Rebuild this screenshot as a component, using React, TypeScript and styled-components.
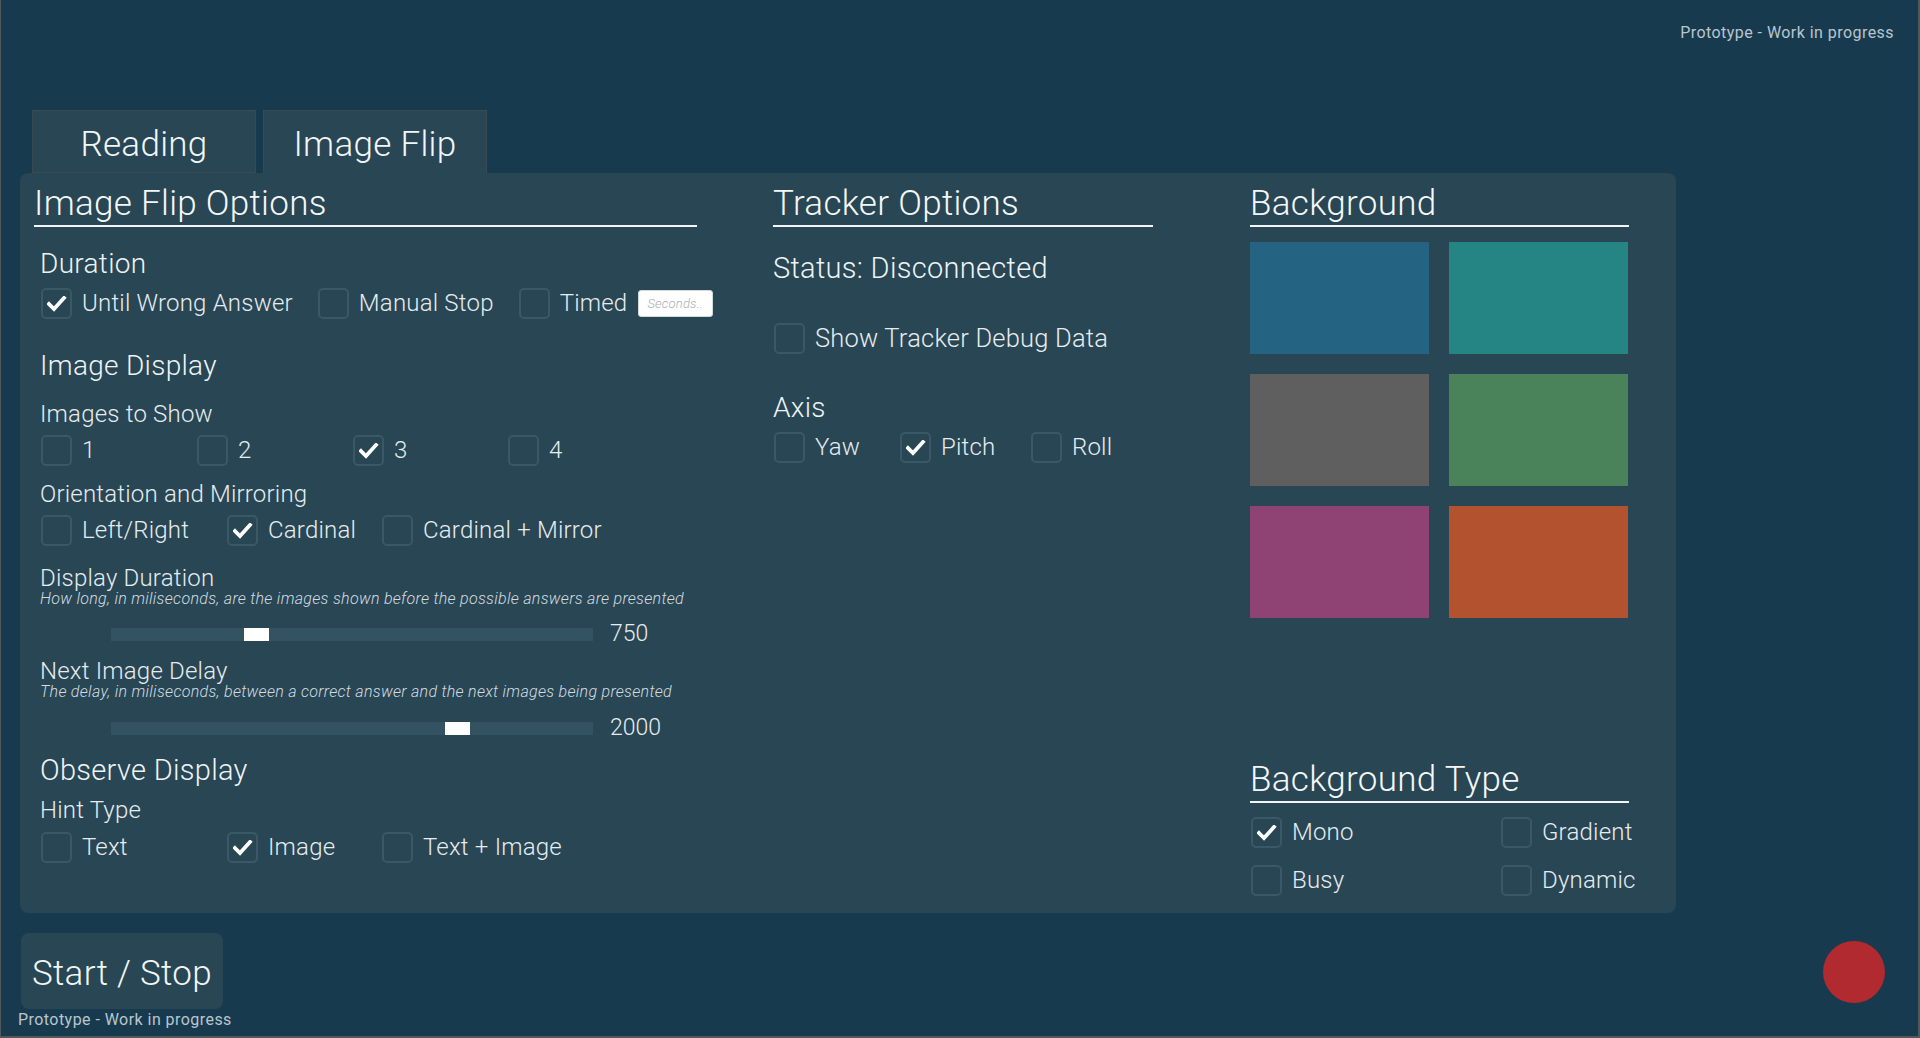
import React from "react";
import styled, { createGlobalStyle } from "styled-components";

const GlobalStyle = createGlobalStyle`
  html, body { margin: 0; padding: 0; background: #183a4e; }
  body { font-family: Roboto, "Liberation Sans", sans-serif; color: #eaf0f2; }
  * { box-sizing: border-box; }
`;

const Page = styled.div`
  width: 1920px;
  height: 1038px;
  background: #183a4e;
  border-left: 1px solid #54575a;
  border-right: 2px solid #54575a;
  border-bottom: 2px solid #54575a;
  display: flex;
  flex-direction: column;
  overflow: hidden;
`;

const TopBar = styled.div`
  height: 110px;
  display: flex;
  justify-content: flex-end;
  align-items: flex-start;
  padding: 23px 24px 0 0;
`;

const Note = styled.div`
  font-size: 16px;
  line-height: 20px;
  font-weight: 400;
  letter-spacing: 0.45px;
  color: #b9c6cd;
`;

const TabBar = styled.div`
  display: flex;
  gap: 7px;
  margin-left: 31px;
`;

const Tab = styled.div<{ $active?: boolean }>`
  width: 224px;
  height: 63px;
  background: #284654;
  border: 1px solid #3a4a53;
  border-bottom-color: ${(p) => (p.$active ? "#284654" : "#3a4a53")};
  font-size: 35px;
  font-weight: 300;
  line-height: 54px;
  padding-top: 7px;
  text-align: center;
  color: #f2f6f7;
  letter-spacing: 0.3px;
`;

const Panel = styled.div`
  margin-left: 19px;
  width: 1656px;
  height: 740px;
  background: #284654;
  border-radius: 8px;
  padding: 6px 0 0 14px;
  display: grid;
  grid-template-columns: 739px 477px 379px;
  align-items: start;
`;

const Column = styled.div<{ $width: number }>`
  width: ${(p) => p.$width}px;
  display: flex;
  flex-direction: column;
`;

const Body = styled.div`
  display: flex;
  flex-direction: column;
  padding-left: 6px;
`;

const SectionTitle = styled.div<{ $mt?: number }>`
  margin-top: ${(p) => p.$mt ?? 0}px;
  font-size: 35px;
  font-weight: 300;
  line-height: 42px;
  letter-spacing: 0.3px;
  padding-top: 4px;
  border-bottom: 2px solid #f2f5f6;
  color: #f4f7f8;
  white-space: nowrap;
`;

const SubHeading = styled.div<{ $mt: number; $size?: number }>`
  margin-top: ${(p) => p.$mt}px;
  font-size: ${(p) => p.$size ?? 28}px;
  font-weight: 300;
  line-height: 34px;
  letter-spacing: 0.3px;
  color: #eef3f5;
  white-space: nowrap;
`;

const FieldLabel = styled.div<{ $mt: number; $lh?: number }>`
  margin-top: ${(p) => p.$mt}px;
  font-size: 24px;
  font-weight: 300;
  line-height: ${(p) => p.$lh ?? 30}px;
  letter-spacing: 0.2px;
  color: #e6ecef;
  white-space: nowrap;
`;

const Hint = styled.div`
  font-size: 16px;
  font-style: italic;
  font-weight: 300;
  line-height: 16px;
  letter-spacing: 0.3px;
  color: #d3dce1;
  white-space: nowrap;
`;

const CheckRow = styled.div<{ $mt: number; $cols: string; $gap?: number; $rowGap?: number }>`
  margin-top: ${(p) => p.$mt}px;
  display: grid;
  grid-template-columns: ${(p) => p.$cols};
  column-gap: ${(p) => p.$gap ?? 0}px;
  row-gap: ${(p) => p.$rowGap ?? 0}px;
  align-items: center;
  justify-content: start;
`;

const CheckItem = styled.label<{ $size?: number }>`
  display: flex;
  align-items: center;
  gap: 10px;
  font-size: ${(p) => p.$size ?? 24}px;
  font-weight: 300;
  line-height: 31px;
  letter-spacing: 0.2px;
  color: #e6ecef;
  white-space: nowrap;
`;

const Box = styled.span`
  width: 31px;
  height: 31px;
  flex: none;
  border: 2px solid #3c5866;
  border-radius: 5px;
  margin-left: 1px;
  display: flex;
  align-items: center;
  justify-content: center;
`;

const SecondsInput = styled.div`
  width: 75px;
  height: 27px;
  background: #ffffff;
  border: 1px solid #d4d9dc;
  border-radius: 3px;
  font-size: 13px;
  font-style: italic;
  font-weight: 300;
  color: #a9b0b4;
  line-height: 25px;
  padding-left: 8px;
  margin-left: 1px;
`;

const SliderRow = styled.div<{ $mt: number }>`
  margin-top: ${(p) => p.$mt}px;
  display: grid;
  grid-template-columns: 482px auto;
  column-gap: 17px;
  align-items: center;
  padding-left: 71px;
  height: 26px;
`;

const Track = styled.div`
  position: relative;
  height: 13px;
  background: #335262;
`;

const Thumb = styled.div`
  position: absolute;
  top: 0;
  width: 25px;
  height: 13px;
  background: #ffffff;
`;

const SliderValue = styled.div`
  font-size: 23px;
  font-weight: 300;
  line-height: 26px;
  color: #e6ecef;
`;

const SwatchGrid = styled.div`
  margin-top: 15px;
  display: grid;
  grid-template-columns: 179px 179px;
  grid-auto-rows: 112px;
  gap: 20px;
`;

const Swatch = styled.div<{ $color: string }>`
  background: ${(p) => p.$color};
`;

const Footer = styled.div`
  margin-top: 20px;
  display: flex;
  justify-content: space-between;
  align-items: flex-start;
  padding: 0 33px 0 20px;
`;

const FooterLeft = styled.div`
  display: flex;
  flex-direction: column;
`;

const StartButton = styled.button`
  width: 202px;
  height: 76px;
  border: none;
  border-radius: 8px;
  background: #284654;
  color: #f2f6f7;
  font-family: Roboto, "Liberation Sans", sans-serif;
  font-size: 35px;
  font-weight: 300;
  letter-spacing: 0.3px;
  padding: 5px 0 0;
`;

const FooterNote = styled(Note)`
  margin: 1px 0 0 -3px;
`;

const RecordDot = styled.div`
  width: 62px;
  height: 62px;
  border-radius: 50%;
  background: #b02a30;
  margin-top: 8px;
`;

const Check: React.FC<{ checked?: boolean }> = ({ checked }) => (
  <Box>
    {checked && (
      <svg width="20" height="16" viewBox="0 0 20 16">
        <polyline points="2,8 7,13 17,2" fill="none" stroke="#ffffff" strokeWidth="3.8" strokeLinecap="square" />
      </svg>
    )}
  </Box>
);

const Option: React.FC<{ label: string; checked?: boolean; size?: number; children?: React.ReactNode }> = ({
  label,
  checked,
  size,
  children,
}) => (
  <CheckItem $size={size}>
    <Check checked={checked} />
    {label}
    {children}
  </CheckItem>
);

const Slider: React.FC<{ mt: number; value: number; position: number }> = ({ mt, value, position }) => (
  <SliderRow $mt={mt}>
    <Track>
      <Thumb style={{ left: `${position * 457}px` }} />
    </Track>
    <SliderValue>{value}</SliderValue>
  </SliderRow>
);

const swatches = ["#246482", "#258484", "#5f5f5f", "#4a8259", "#8f4374", "#b3522e"];

export default function App() {
  return (
    <>
      <GlobalStyle />
      <Page>
        <TopBar>
          <Note>Prototype - Work in progress</Note>
        </TopBar>
        <TabBar>
          <Tab>Reading</Tab>
          <Tab $active>Image Flip</Tab>
        </TabBar>
        <Panel>
          <Column $width={663}>
            <SectionTitle>Image Flip Options</SectionTitle>
            <Body>
              <SubHeading $mt={20}>Duration</SubHeading>
              <CheckRow $mt={7} $cols="auto auto auto" $gap={24}>
                <Option label="Until Wrong Answer" checked />
                <Option label="Manual Stop" />
                <Option label="Timed">
                  <SecondsInput>Seconds..</SecondsInput>
                </Option>
              </CheckRow>
              <SubHeading $mt={30}>Image Display</SubHeading>
              <FieldLabel $mt={16}>Images to Show</FieldLabel>
              <CheckRow $mt={6} $cols="156px 156px 155px 156px">
                <Option label="1" />
                <Option label="2" />
                <Option label="3" checked />
                <Option label="4" />
              </CheckRow>
              <FieldLabel $mt={13}>Orientation and Mirroring</FieldLabel>
              <CheckRow $mt={6} $cols="186px 155px auto">
                <Option label="Left/Right" />
                <Option label="Cardinal" checked />
                <Option label="Cardinal + Mirror" />
              </CheckRow>
              <FieldLabel $mt={19} $lh={26}>Display Duration</FieldLabel>
              <Hint>How long, in miliseconds, are the images shown before the possible answers are presented</Hint>
              <Slider mt={14} value={750} position={0.291} />
              <FieldLabel $mt={11} $lh={26}>Next Image Delay</FieldLabel>
              <Hint>The delay, in miliseconds, between a correct answer and the next images being presented</Hint>
              <Slider mt={15} value={2000} position={0.731} />
              <SubHeading $mt={12} $size={29}>Observe Display</SubHeading>
              <FieldLabel $mt={8}>Hint Type</FieldLabel>
              <CheckRow $mt={7} $cols="186px 155px auto">
                <Option label="Text" />
                <Option label="Image" checked />
                <Option label="Text + Image" />
              </CheckRow>
            </Body>
          </Column>

          <Column $width={380}>
            <SectionTitle>Tracker Options</SectionTitle>
            <SubHeading $mt={24} $size={29}>Status: Disconnected</SubHeading>
            <CheckRow $mt={38} $cols="auto">
              <Option label="Show Tracker Debug Data" size={25.5} />
            </CheckRow>
            <SubHeading $mt={37}>Axis</SubHeading>
            <CheckRow $mt={7} $cols="126px 131px auto">
              <Option label="Yaw" />
              <Option label="Pitch" checked />
              <Option label="Roll" />
            </CheckRow>
          </Column>

          <Column $width={379}>
            <SectionTitle>Background</SectionTitle>
            <SwatchGrid>
              {swatches.map((c) => (
                <Swatch key={c} $color={c} />
              ))}
            </SwatchGrid>
            <SectionTitle $mt={137}>Background Type</SectionTitle>
            <CheckRow $mt={14} $cols="250px auto" $rowGap={17}>
              <Option label="Mono" checked />
              <Option label="Gradient" />
              <Option label="Busy" />
              <Option label="Dynamic" />
            </CheckRow>
          </Column>
        </Panel>
        <Footer>
          <FooterLeft>
            <StartButton>Start / Stop</StartButton>
            <FooterNote>Prototype - Work in progress</FooterNote>
          </FooterLeft>
          <RecordDot />
        </Footer>
      </Page>
    </>
  );
}
